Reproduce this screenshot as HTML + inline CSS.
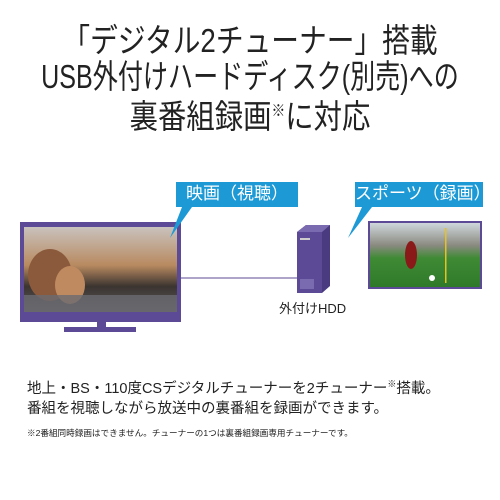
<!DOCTYPE html>
<html><head><meta charset="utf-8"><style>
body{margin:0;width:500px;height:500px;background:#fff;position:relative;overflow:hidden;font-family:"Liberation Sans","Noto Sans CJK JP",sans-serif;color:#222}
.t{position:absolute;left:0;width:500px;height:36px;font-size:33px;line-height:36px;white-space:nowrap}
.t span{position:absolute;left:50%;top:0;display:inline-block;transform:translateX(-50%) scaleX(0.86)}
.a{position:absolute;white-space:nowrap}
</style></head><body>
<div class="t" style="top:23px"><span style="transform:translateX(-50%) scaleX(0.84)">「デジタル2チューナー」搭載</span></div>
<div class="t" style="top:59px"><span style="transform:translateX(-50%) scaleX(0.76)">USB外付けハードディスク(別売)への</span></div>
<div class="t" style="top:94px"><span>裏番組録画<sup style="font-size:16px">※</sup>に対応</span></div>

<svg style="position:absolute;left:0;top:0" width="500" height="500">
<defs>
<linearGradient id="sky" x1="0" y1="0" x2="0" y2="1"><stop offset="0" stop-color="#c9c2bd"/><stop offset="0.45" stop-color="#b88a60"/><stop offset="0.7" stop-color="#3b3430"/><stop offset="1" stop-color="#5a5a5e"/></linearGradient>
<linearGradient id="fld" x1="0" y1="0" x2="0" y2="1"><stop offset="0" stop-color="#cfd7dc"/><stop offset="0.35" stop-color="#8a8a80"/><stop offset="0.55" stop-color="#3f8a34"/><stop offset="1" stop-color="#2f7a2a"/></linearGradient>
</defs>
<rect x="20" y="222" width="161" height="100" fill="#5c4a96"/>
<rect x="24" y="227" width="153" height="85" fill="url(#sky)"/>
<ellipse cx="50" cy="275" rx="22" ry="26" fill="#8b5a3c"/>
<ellipse cx="70" cy="285" rx="15" ry="19" fill="#c08a60"/>
<rect x="24" y="295" width="153" height="17" fill="#6a6a70" opacity=".8"/>
<rect x="97" y="322" width="9" height="6" fill="#5c4a96"/>
<rect x="64" y="327" width="72" height="5" fill="#5c4a96"/>
<line x1="181" y1="278" x2="297" y2="278" stroke="#5c4a96" stroke-width="1"/>
<polygon points="297,232 306,225 330,225 330,286 322,293 297,293" fill="#4a3a80"/>
<polygon points="297,232 306,225 330,225 322,232" fill="#7a6ab0"/>
<rect x="297" y="232" width="25" height="61" fill="#5c4a96"/>
<rect x="300" y="238" width="10" height="2" fill="#ccc"/>
<rect x="300" y="279" width="14" height="10" fill="#7a6ab0"/>
<polygon points="176,182 298,182 298,207 192,207 170,238 182,207 176,207" fill="#1d9ad6"/>
<polygon points="355,182 483,182 483,207 372,207 348,238 362,207 355,207" fill="#1d9ad6"/>
<rect x="368" y="221" width="114" height="68" fill="#5c4a96"/>
<rect x="370" y="223" width="110" height="64" fill="url(#fld)"/>
<rect x="445" y="228" width="1.5" height="55" fill="#e8c020"/>
<ellipse cx="411" cy="255" rx="6" ry="14" fill="#8a1a1a"/>
<circle cx="432" cy="278" r="3" fill="#fff"/>
</svg>
<div class="a" style="left:176px;top:183px;width:122px;text-align:center;color:#fff;font-size:17px;line-height:22px">映画（視聴）</div>
<div class="a" style="left:355px;top:183px;width:128px;text-align:center;color:#fff;font-size:17px;line-height:22px">スポーツ（録画）</div>
<div class="a" style="left:279px;top:298px;font-size:13px;color:#222">外付けHDD</div>
<div class="a" style="left:27px;top:374px;font-size:14.5px;line-height:20px">地上・BS・110度CSデジタルチューナーを2チューナー<sup style="font-size:9px">※</sup>搭載。<br>番組を視聴しながら放送中の裏番組を録画ができます。</div>
<div class="a" style="left:27px;top:427px;font-size:8.6px">※2番組同時録画はできません。チューナーの1つは裏番組録画専用チューナーです。</div>
</body></html>
